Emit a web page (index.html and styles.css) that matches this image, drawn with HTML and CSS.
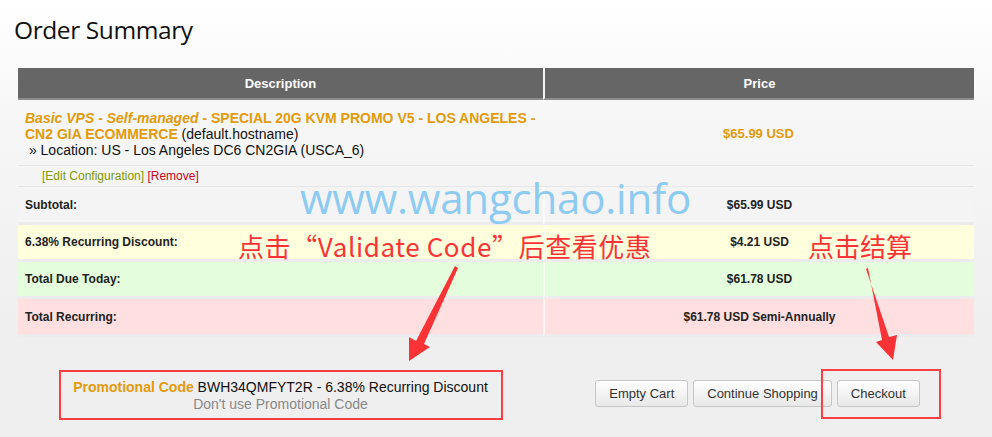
FILE: index.html
```html
<!DOCTYPE html>
<html lang="en">
<head>
    <meta charset="UTF-8">
    <title>Order Summary</title>
    <link rel="stylesheet" href="styles.css">
</head>
<body>
    <div class="page">
        <h1 class="title">Order Summary</h1>

        <table class="cart">
            <thead>
                <tr>
                    <th class="col-desc">Description</th>
                    <th class="col-price">Price</th>
                </tr>
            </thead>
            <tbody>
                <tr class="product">
                    <td>
                        <span class="prod-name"><i>Basic VPS - Self-managed</i> - SPECIAL 20G KVM PROMO V5 - LOS ANGELES - CN2 GIA ECOMMERCE</span> (default.hostname)<br>
                        &nbsp;&raquo; Location: US - Los Angeles DC6 CN2GIA (USCA_6)
                    </td>
                    <td class="price prod-price">$65.99 USD</td>
                </tr>
                <tr class="actions">
                    <td colspan="2"><a class="edit" href="#">[Edit Configuration]</a> <a class="remove" href="#">[Remove]</a></td>
                </tr>
                <tr class="total subtotal">
                    <td>Subtotal:</td>
                    <td class="price">$65.99 USD</td>
                </tr>
                <tr class="total discount">
                    <td>6.38% Recurring Discount:</td>
                    <td class="price">$4.21 USD</td>
                </tr>
                <tr class="total due">
                    <td>Total Due Today:</td>
                    <td class="price">$61.78 USD</td>
                </tr>
                <tr class="total recurring">
                    <td>Total Recurring:</td>
                    <td class="price">$61.78 USD Semi-Annually</td>
                </tr>
            </tbody>
        </table>

        <div class="bottom">
            <div class="promo">
                <div class="promo-box">
                    <div><span class="promo-label">Promotional Code</span> BWH34QMFYT2R - 6.38% Recurring Discount</div>
                    <a class="promo-remove" href="#">Don't use Promotional Code</a>
                </div>
            </div>
            <div class="buttons">
                <button class="btn">Empty Cart</button>
                <button class="btn">Continue Shopping</button>
                <button class="btn">Checkout</button>
            </div>
        </div>
    </div>

    <!-- annotations laid over the screenshot -->
    <div class="watermark">www.wangchao.info</div>
    <div class="note note-code">点击“Validate Code”后查看优惠</div>
    <div class="note note-pay">点击结算</div>
    <svg class="arrows" width="992" height="437" viewBox="0 0 992 437">
        <polygon points="458,268 424,344 430,347 409,361 409,337 416,341 455,266" fill="#fb3336"/>
        <polygon points="866,269 889,337 897,335 893,360 876,342 882,340 868,268" fill="#fb3336"/>
    </svg>
    <div class="checkout-mark"></div>
</body>
</html>
```

FILE: styles.css
```css
/* page */
html, body {
    margin: 0;
    padding: 0;
}

body {
    width: 992px;
    height: 437px;
    overflow: hidden;
    position: relative;
    font-family: 'Liberation Sans', Arial, sans-serif;
    color: #222;
    background: linear-gradient(to bottom, #ffffff 0%, #f6f6f6 30%, #efefef 75%, #efefef 100%);
}

.page {
    padding: 0 18px;
}

.title {
    margin: 0 0 0 -4px;
    padding: 13px 0 0 0;
    height: 68px;
    box-sizing: border-box;
    font-family: 'Open Sans', 'Noto Sans', sans-serif;
    font-weight: 400;
    font-size: 24.5px;
    letter-spacing: -0.4px;
    color: #111;
}

/* table */
.cart {
    width: 956px;
    border-collapse: separate;
    border-spacing: 0;
    font-size: 13px;
}

.cart th {
    background: #666;
    color: #fff;
    font-size: 13px;
    font-weight: bold;
    height: 30px;
    padding: 0;
    border-bottom: 2px solid #8c8c8c;
}

.cart .col-desc {
    width: 525px;
}

.cart .col-price {
    border-left: 2px solid #f4f4f4;
}

.product td {
    padding: 10px 0 7px 7px;
    line-height: 16px;
    font-size: 14px;
    color: #111;
    border-bottom: 1px solid #e6e6e6;
    vertical-align: middle;
}

.prod-name {
    color: #e39a0d;
    font-weight: bold;
}

.product .prod-price {
    padding-left: 0;
    text-align: center;
    font-weight: bold;
    color: #e39a0d;
    font-size: 13px;
}

.actions td {
    height: 20px;
    padding: 0 0 0 24px;
    font-size: 12px;
    border-bottom: 1px solid #e6e6e6;
}

.actions a {
    text-decoration: none;
}

.edit {
    color: #7f9a04;
}

.remove {
    color: #d0021b;
}

.total td {
    height: 35px;
    padding: 0 0 0 7px;
    font-size: 12px;
    font-weight: bold;
    color: #222;
    border-bottom: 3px solid #ececec;
}

.total .price {
    padding: 0;
    text-align: center;
    border-left: 2px solid rgba(255, 255, 255, 0.6);
}

.subtotal td {
    background: #f4f4f4;
}

.discount td {
    background: #ffffdd;
}

.due td {
    background: #e4fddc;
}

.recurring td {
    background: #ffdfdf;
}

.discount td,
.due td {
    height: 34px;
}

/* promo + buttons */
.bottom {
    display: grid;
    grid-template-columns: 525px 431px;
    margin-top: 33px;
}

.promo {
    display: flex;
    justify-content: center;
}

.promo-box {
    width: 440px;
    height: 39px;
    border: 2px solid #fb3f43;
    text-align: center;
    font-size: 14px;
    line-height: 17px;
    padding-top: 7px;
    color: #111;
}

.promo-label {
    color: #e39a0d;
    font-weight: bold;
}

.promo-remove {
    color: #888;
    text-decoration: none;
}

.buttons {
    display: flex;
    justify-content: center;
    align-items: flex-start;
    gap: 5px;
    padding-top: 10px;
    padding-right: 2px;
}

.btn {
    height: 27px;
    padding: 0 13px;
    font-family: 'Liberation Sans', Arial, sans-serif;
    font-size: 13px;
    color: #333;
    background: linear-gradient(to bottom, #ffffff 0%, #e8e8e8 100%);
    border: 1px solid #c6c6c6;
    border-radius: 3px;
}

/* annotations */
.watermark {
    position: absolute;
    left: 300px;
    top: 170px;
    font-family: 'Open Sans', 'Noto Sans', sans-serif;
    font-size: 42px;
    line-height: 56px;
    color: #8ecbf2;
    letter-spacing: -0.2px;
}

.note {
    position: absolute;
    font-family: 'Noto Sans CJK SC', 'Noto Sans', sans-serif;
    font-size: 26px;
    line-height: 34px;
    color: #fb3336;
}

.note-code {
    left: 238px;
    top: 229px;
    letter-spacing: 0.6px;
}

.note-pay {
    left: 808px;
    top: 229px;
}

.arrows {
    position: absolute;
    left: 0;
    top: 0;
}

.checkout-mark {
    position: absolute;
    left: 821px;
    top: 369px;
    width: 116px;
    height: 46px;
    border: 2px solid #fb3f43;
}
```
